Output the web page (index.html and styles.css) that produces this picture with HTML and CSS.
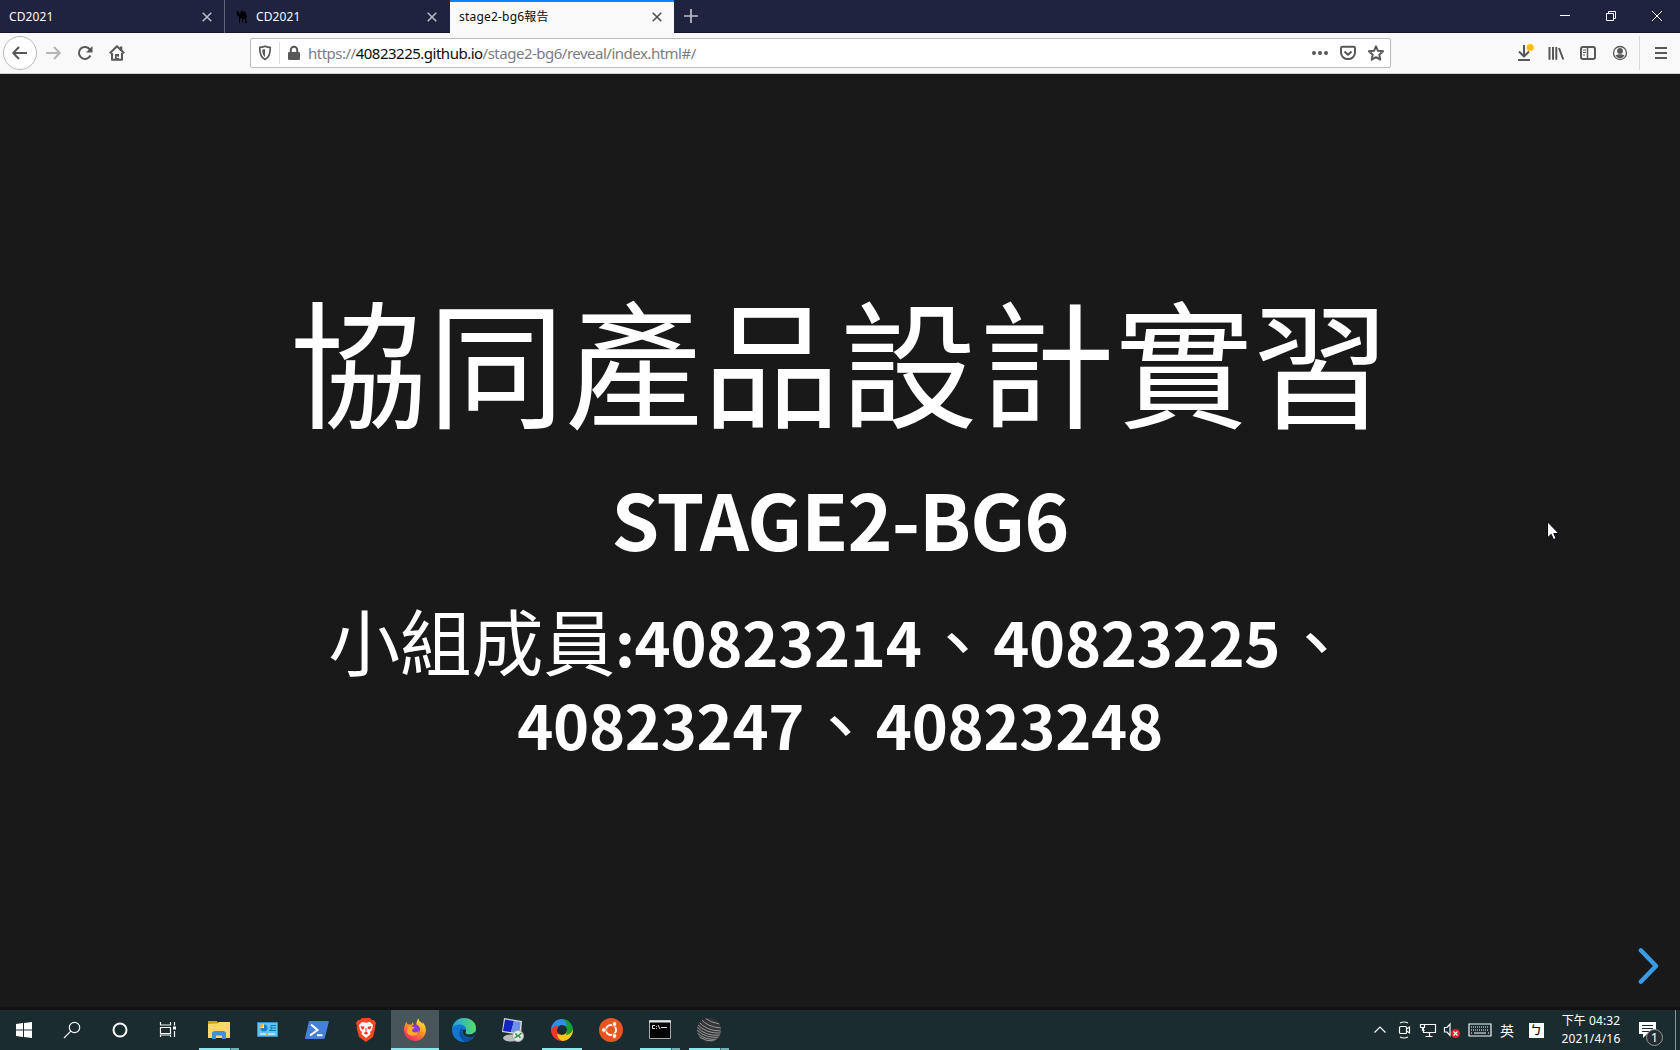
FILE: index.html
```html
<!DOCTYPE html>
<html lang="zh-Hant">
<head>
<meta charset="utf-8">
<title>stage2-bg6報告</title>
<link rel="stylesheet" href="styles.css">
</head>
<body>
<div class="desktop">
  <header class="tabbar">
    <div class="tab"><span class="label">CD2021</span><svg class="close" viewBox="0 0 10 10"><path d="M.7.7l8.6 8.6M9.3.7L.7 9.3"/></svg></div>
    <div class="tab second">
      <svg class="camel" viewBox="0 0 12 13"><path d="M0 2l2-1 1 2 1 1 1-3 1-1 1 2 1-1 2 2 1 4-1 1 1 5H9V9H7v4H6V9L4 8v5H3V7L1 5V3z" fill="#000"/></svg>
      <span class="label">CD2021</span><svg class="close" viewBox="0 0 10 10"><path d="M.7.7l8.6 8.6M9.3.7L.7 9.3"/></svg></div>
    <div class="tab active"><span class="label">stage2-bg6報告</span><svg class="close" viewBox="0 0 10 10"><path d="M.7.7l8.6 8.6M9.3.7L.7 9.3"/></svg></div>
    <svg class="newtab" viewBox="0 0 14 14"><path d="M7 0v14M0 7h14"/></svg>
    <div class="winbtns">
      <svg viewBox="0 0 10 10"><path d="M0 4.5h10"/></svg>
      <svg viewBox="0 0 10 10"><path d="M.5 2.5h7v7h-7zM2.500 2.500v-2h7v7h-2"/></svg>
      <svg viewBox="0 0 10 10"><path d="M0 0l10 10M10 0L0 10"/></svg>
    </div>
  </header>

  <nav class="toolbar">
    <div class="navbtns">
      <div class="back"><svg viewBox="0 0 16 16"><path d="M15 8H1.500M7 2L1.200 8 7 14"/></svg></div>
      <svg class="ico dim" viewBox="0 0 16 16"><path d="M1 8h13.500M9 2l5.800 6L9 14"/></svg>
      <svg class="ico" viewBox="0 0 16 16"><path d="M13.400 10.500A6 6 0 1 1 13 4.600"/><path class="fill" d="M15.500 1v6.500H9z"/></svg>
      <svg class="ico" viewBox="0 0 16 16"><path d="M.8 8.300L8 1.300l7.200 7M3 8v6.800h10V8"/><path class="fill" d="M6 9h4v6H6zM11 1.500h2.300v4H11z"/><path d="M8.700 11.500v1.500" style="stroke:#fff"/></svg>
    </div>
    <div class="urlbar">
      <svg class="ico shield" viewBox="0 0 16 16"><path d="M8 1.200c2 .9 4 1.200 5.300 1.200 0 6-.8 9.800-5.300 12.200C3.500 12.200 2.700 8.400 2.700 2.400 4 2.400 6 2.100 8 1.200z"/><path class="fill" d="M8 4v8C6 10.500 5.400 8.500 5.300 4.700z"/></svg>
      <i class="usep"></i>
      <svg class="ico lock" viewBox="0 0 16 16"><rect class="fill" x="2" y="7" width="12" height="8" rx="1.300"/><path d="M4.800 8V5a3.200 3.200 0 0 1 6.400 0v3"/></svg>
      <span class="url">https://<b>40823225.github.io</b>/stage2-bg6/reveal/index.html#/</span>
      <span class="urlacts">
        <svg class="ico" viewBox="0 0 16 16"><g class="fill"><circle cx="2" cy="8" r="2"/><circle cx="8" cy="8" r="2"/><circle cx="14" cy="8" r="2"/></g></svg>
        <svg class="ico" viewBox="0 0 16 16"><path d="M2.200 1.800h11.600q1.200 0 1.200 1.200v4.500a7 6.600 0 0 1-14 0V3q0-1.200 1.200-1.200zM4.500 6.500L8 9.800l3.500-3.300"/></svg>
        <svg class="ico" viewBox="0 0 16 16"><path d="M8 1.300l2 4.500 5 .5-3.700 3.400 1 5L8 12.200l-4.300 2.500 1-5L1 6.300l5-.5z"/></svg>
      </span>
    </div>
    <div class="tools">
      <svg class="ico" viewBox="0 0 16 16"><path d="M8 0v11M3 6.500l5 5 5-5M2 15h12"/><circle cx="14.200" cy="2.600" r="3.500" fill="#ffbf00" style="stroke:none"/></svg>
      <svg class="ico" viewBox="0 0 16 16"><path d="M1.500 2v12.700M5 2v12.700M8.300 2v12.700M11 3l4.300 11.500"/></svg>
      <svg class="ico" viewBox="0 0 16 16"><rect x="1" y="2" width="14" height="12" rx="2"/><path d="M7.500 2v12" style="stroke-width:1.500"/><path d="M3 5h3M3 7.500h3M3 10h2" style="stroke-width:1"/></svg>
      <svg class="ico" viewBox="0 0 16 16"><circle cx="8" cy="8" r="6.500" style="stroke-width:1.300"/><circle class="fill" cx="8" cy="5.900" r="2.900"/><path class="fill" d="M3.500 10.300q4.500-2 9 0-1.500 3-4.500 3t-4.500-3z"/></svg>
      <i class="tsep"></i>
      <svg class="ico menu" viewBox="0 0 16 16"><path d="M2 3h12M2 8h12M2 13h12"/></svg>
    </div>
  </nav>

  <main class="slide">
    <h1>協同產品設計實習</h1>
    <h2>STAGE2-BG6</h2>
    <h3><span class="line"><span class="han">小組成員</span>:40823214<span class="mark">、</span>40823225<span class="mark">、</span></span><span class="line">40823247<span class="mark">、</span>40823248</span></h3>
    <svg class="next" viewBox="0 0 20 36"><path d="M2.300 2.300L17.500 18 2.300 33.700"/></svg>
    <svg class="cursor" viewBox="0 0 13 20"><path d="M.5.8v16l3.700-3.500 2.300 5.200 2.600-1-2.300-5h5z"/></svg>
  </main>

  <footer class="taskbar">
    <div class="sys">
      <div><svg viewBox="0 0 24 24"><path fill="#fff" d="M4 6l7-1v6.500H4zM12 4.900L20 4v7.500h-8zM4 12.500h7V19l-7-1zM12 12.500h8V20l-8-1z"/></svg></div>
      <div><svg class="line-ico" viewBox="0 0 24 24"><circle cx="14.500" cy="9.500" r="5.200"/><path d="M10.800 13.200L4 20"/></svg></div>
      <div><svg viewBox="0 0 24 24"><circle cx="12" cy="12" r="6.500" fill="none" stroke="#fff" stroke-width="2"/></svg></div>
      <div><svg class="line-ico" viewBox="0 0 24 24"><path d="M4.500 4v3h10V4M4.500 9.500h10v6h-10zM4.500 19v-2h10v2M18.500 4v3.500M18.500 13v6"/><path d="M17 8.500h3v3h-3z" fill="#fff" stroke="none"/></svg></div>
    </div>
    <div class="apps">
      <div class="app run multi"><svg viewBox="0 0 24 24"><path fill="#dc9b13" d="M1 3h9l1 2v3H1z"/><path fill="#ffd66b" d="M1 6l9-.5 2-1.500h11v16H1z"/><path fill="#3d91d4" d="M5 21v-6.500L7 13h10l2 1.500V21h-4v-3.500H9V21z"/></svg></div>
      <div class="app"><svg viewBox="0 0 24 24"><path fill="#5cc5f5" stroke="#2f92ce" d="M1.500 4.500h20v14h-20z"/><circle cx="8" cy="10" r="3.800" fill="#fff"/><path fill="#1780cf" d="M8 10V6.200a3.800 3.800 0 1 1-3.800 3.800z"/><path fill="#f8b137" d="M7.500 9.500V5.700a3.800 3.800 0 0 0-3.800 3.800z"/><path stroke="#1774b5" d="M13 12.500h2v-5h5M15 10h5M15 12.500h5" fill="none"/><path stroke="#fff" d="M4 16h15"/><path stroke="#f8b137" stroke-width="2" d="M10 16h2"/></svg></div>
      <div class="app"><svg viewBox="0 0 24 24"><path fill="#467fdb" d="M4.500 3H23q1 0 .8 1l-4 16q-.3 1-1.300 1H.8q-1 0-.8-1L3.700 4Q4 3 4.500 3z"/><path d="M6 6.500l6.500 5.500L5 17.500M12 17.200h5.500" fill="none" stroke="#fff" stroke-width="2"/></svg></div>
      <div class="app"><svg viewBox="0 0 24 24"><path fill="#fb4420" d="M8 0h8l2 2 2 0 2 3-1 3 .3 2L19 19l-7 5-7-5L2.700 10 3 8 2 5l2-3 2 0z"/><path fill="#fff" d="M8 4l4 .7L16 4l3 3-1 5-2 2 .6 2L12 20l-4.600-4 .6-2-2-2-1-5z"/><path fill="#ed3d22" d="M6.500 8l4 .8-.5 2-2 1zM17.500 8l-4 .8.5 2 2 1zM9.500 15l2.500-1.300 2.500 1.300-2.500 1.700zM11.500 10h1v4h-1z"/></svg></div>
      <div class="app run focus"><svg viewBox="0 0 24 24"><defs><linearGradient id="ff" x1=".8" y1="0" x2=".2" y2="1"><stop stop-color="#ffed3d"/><stop offset=".45" stop-color="#ff9826"/><stop offset="1" stop-color="#f7156e"/></linearGradient></defs><path fill="url(#ff)" d="M3.500 3.500Q4 6 5 6.500 7 6 8 7l2-3q0 3 1.500 3.500h2q-.8-4 2-7 0 2.500 3 4l.7 1.500q.8-1 .5-2 3.800 5 3.100 10A11 11 0 0 1 1 13Q.5 9 3.500 3.500z"/><circle cx="12" cy="11.500" r="5" fill="#8a39dd"/><path fill="#ffad28" d="M5 9q4-2 7 1-3 0-3 3 3 3 7 0-2 5-7 4.500T4 13z"/></svg></div>
      <div class="app"><svg viewBox="0 0 24 24"><defs><linearGradient id="ed"><stop stop-color="#219de2"/><stop offset="1" stop-color="#5ade66"/></linearGradient></defs><circle cx="12" cy="12" r="12" fill="#1177d3"/><path fill="url(#ed)" d="M.3 9.500C2 3 7 0 12 0c7 0 12 4.500 12 10 0 4-3 6.500-7 6.500q-5 0-3-4c1.500-6-9-8.500-13.700-3z"/><path fill="#1a2c30" d="M14 12.500q-2 4 3 4 3.500 0 6-2.500l1.500 1.500-4 4q-2 .5-5-.5Q10 17.500 11 12q2-1 3 .5z"/><path fill="#0d519e" d="M9 10q-5 8 4 14 5 0 9-5-5 2-9-.5-4-3-2-7z"/></svg></div>
      <div class="app"><svg viewBox="0 0 24 24"><ellipse cx="10" cy="20" rx="8" ry="3.500" fill="#bdbdbd"/><path fill="#d9d9d5" d="M3 0l18 3-1 14L1 14z"/><path fill="#1524c6" d="M4 1.500l9 1.500-3 11-8-1z"/><path fill="#6c8fea" d="M13 3l6.500 1-1 11-8.500-1z"/><circle cx="17" cy="18" r="5.500" fill="#e7e8e5" stroke="#aaa"/><path d="M13.500 20l3-2-2-2.500M20.500 15l-3 2.500 2 2.500" stroke="#269646" stroke-width="1.500" fill="none"/></svg></div>
      <div class="app run"><svg viewBox="0 0 24 24"><g fill="none" stroke-width="6"><path stroke="#318df0" d="M4 12a8 8 0 0 1 8-8"/><path stroke="#159c32" d="M12 4a8 8 0 0 1 8 8"/><path stroke="#fac819" d="M20 12a8 8 0 0 1-8 8"/><path stroke="#ec3729" d="M12 20a8 8 0 0 1-8-8"/></g><path fill="#318df0" d="M11 1q5 1 6 7l-5-1z"/><path fill="#159c32" d="M23 11q-1 5-7 6l1-5z"/><path fill="#fac819" d="M13 23q-5-1-6-7l5 1z"/><path fill="#ec3729" d="M1 13q1-5 7-6l-1 5z"/></svg></div>
      <div class="app"><svg viewBox="0 0 24 24"><circle cx="12" cy="12" r="12" fill="#e95420"/><circle cx="12" cy="12" r="5" fill="none" stroke="#fff" stroke-width="2"/><g fill="#fff" stroke="#e95420" stroke-width="1"><circle cx="5" cy="12" r="2.400"/><circle cx="15.500" cy="6" r="2.400"/><circle cx="15.500" cy="18" r="2.400"/></g></svg></div>
      <div class="app run multi"><svg viewBox="0 0 24 24"><path fill="#040404" stroke="#aaa" d="M1.500 2.500h21v18h-21z"/><path stroke="#e8e8e8" stroke-width="2" d="M1 3.500h22"/><path stroke="#ddd" fill="none" d="M7 7.500H4.500v3H7M8.500 8v.8M8.500 10v.8M10 7l2 4M13 9.500h6"/></svg></div>
      <div class="app run multi"><svg viewBox="0 0 24 24"><defs><clipPath id="ball"><circle cx="12" cy="12" r="12"/></clipPath></defs><circle cx="12" cy="12" r="12" fill="#343637"/><g clip-path="url(#ball)" fill="none" stroke="#a0a3a2" stroke-width=".9"><path d="M4 1q6 8 20 9M1 3q8 10 23 10M0 6q9 10 24 9M0 9q9 10 24 8M0 12q9 9 24 7M0 15q9 8 22 6M2 19q8 5 17 4M8 0q6 5 15 6"/></g></svg></div>
    </div>
    <div class="tray">
      <div class="cell"><svg class="line-ico" viewBox="0 0 24 24"><path d="M6.500 14.500l5.500-5.500 5.500 5.500"/></svg></div>
      <div class="cell"><svg class="line-ico" viewBox="0 0 24 24"><rect x="7.500" y="8.500" width="7" height="7" rx="1"/><path d="M14.500 11l3-2v6l-3-2M8 5q4-2 8 0M8 19q4 2 8 0"/></svg></div>
      <div class="cell"><svg class="line-ico" viewBox="0 0 24 24"><path d="M9 6.500h10.500v8H7.500V10M13.500 14.500v4M9.500 18.500h7M4.500 6.500h4v3h-4zM6.500 9.500v3h2"/></svg></div>
      <div class="cell"><svg class="line-ico" viewBox="0 0 24 24"><path d="M4.500 9.500H7l3-3.500v11.500l-3-3.500H4.500z"/><circle cx="15.500" cy="15.500" r="4.500" fill="#dd252d" stroke="none"/><path d="M13.500 13.500l4 4M17.500 13.500l-4 4"/></svg></div>
      <div class="cell kb"><svg class="line-ico" viewBox="0 0 24 14"><path d="M1 1h22v12H1z"/><path stroke-dasharray="1 1" d="M3 4h18M3 7h18"/><path d="M3 10h1M6 10h12M20 10h1"/></svg></div>
      <div class="cell ime">英</div>
      <div class="cell bopo"><span>ㄅ</span></div>
      <div class="clock"><span>下午 04:32</span><span class="date">2021/4/16</span></div>
      <div class="notice"><svg viewBox="0 0 26 26"><path fill="#fff" d="M1 2h17v12H9l-4 4v-4H1z"/><path stroke="#1a2c30" d="M4 5.500h11M4 8.500h11M4 11.500h7"/><circle cx="16.500" cy="17.500" r="8" fill="#262d2f" stroke="#949b9c"/><text x="16.500" y="22" text-anchor="middle">1</text></svg></div>
      <i class="edge"></i>
    </div>
  </footer>
</div>
</body>
</html>
```

FILE: styles.css
```css
* { box-sizing: border-box; }
body { margin: 0; overflow: hidden; font-family: "Noto Sans", "Noto Sans CJK TC", sans-serif; }
svg { display: block; flex: none; overflow: visible; }
.desktop { width: 1680px; height: 1050px; display: flex; flex-direction: column; background: #191919; }

/* Tab strip */
.tabbar { height: 33px; flex: none; display: flex; background: #202340; border-bottom: 1px solid #14152d; font-size: 12px; color: #f9f9fa; }
.tab { width: 225px; height: 33px; flex: none; display: flex; align-items: center; padding: 0 12px 0 9px; border-right: 1px solid #62647a; }
.tab .label { flex: 1; white-space: nowrap; letter-spacing: .1px; line-height: 32px; }
.tab.second { border-right: 0; padding: 0 13px 0 11px; }
.tab.active { width: 224px; background: #f9f9f9; color: #0c0c0d; border: 0; border-top: 2px solid #0a84ff; padding-bottom: 2px; padding-right: 12px; }
.close { width: 10px; height: 10px; fill: none; stroke: #bcbdc8; stroke-width: 1.500; }
.active .close { stroke: #4b4b4d; }
.tab.active .label { letter-spacing: .2px; }
.camel { width: 12px; height: 13px; margin-right: 8px; }
.newtab { width: 14px; height: 14px; margin: 9px 0 0 10px; stroke: #bebec9; stroke-width: 1.700; }
.winbtns { margin: 11px 18px 0 auto; display: flex; gap: 36px; }
.winbtns svg { width: 10px; height: 10px; fill: none; stroke: #fff; stroke-width: 1; }

/* Navigation toolbar */
.toolbar { height: 41px; flex: none; display: flex; align-items: center; background: #f9f9f9; border-bottom: 1px solid #d0d0d0; padding-left: 3px; }
.ico, .back svg { width: 16px; height: 16px; fill: none; stroke: #58585a; stroke-width: 2; stroke-linejoin: round; }
.fill { fill: #58585a; stroke: none; }
.navbtns { width: 247px; display: flex; align-items: center; gap: 16px; }
.back { width: 34px; height: 34px; margin-right: -8px; border: 1px solid #b9b9b9; border-radius: 50%; background: #fff; display: grid; place-items: center; }
.ico.dim { stroke: #b5b5b5; }
.urlbar { width: 1141px; height: 30px; flex: none; border: 1px solid #bcbcbc; border-radius: 2px; background: #fff; display: flex; align-items: center; padding: 0 6px; }
.ico.shield { stroke-width: 1.700; }
.usep { width: 1px; height: 22px; margin: 0 6px; background: #dedede; }
.url { margin-left: 6px; color: #7c7c80; font-size: 15px; line-height: 28px; letter-spacing: -.5px; white-space: nowrap; }
.url b { color: #0c0c0d; font-weight: 400; }
.urlacts { margin-left: auto; display: flex; gap: 12px; }
.tools { flex: 1; display: flex; align-items: center; justify-content: flex-end; gap: 16px; padding-right: 11px; }
.tsep { width: 1px; height: 34px; margin: 0 -3px 0 -5px; background: #d9d9db; }

/* Slide */
.slide { flex: 1; position: relative; display: flex; flex-direction: column; align-items: center; color: #fff; border-bottom: 3px solid #121212; font-family: "Noto Sans CJK TC", sans-serif; white-space: nowrap; }
h1, h2, h3 { margin: 0; }
h1 { margin-top: 202px; font-size: 137.500px; line-height: 165px; font-weight: 400; }
h2 { margin-top: 36px; font-size: 76.500px; line-height: 82px; font-weight: 700; letter-spacing: -.9px; }
h3 { margin-top: 40px; font-size: 61.300px; line-height: 83px; font-weight: 700; letter-spacing: -.3px; }
.line { display: flex; justify-content: center; }
.han, .mark { font-size: 72px; line-height: 80px; font-weight: 400; }
.next { position: absolute; right: 21px; bottom: 23px; width: 21px; height: 36px; fill: none; stroke: #3b9ce5; stroke-width: 4.500; stroke-linecap: round; stroke-linejoin: round; }
.cursor { position: absolute; left: 1547px; top: 447px; width: 13px; height: 20px; fill: #fff; stroke: #080812; }

/* Taskbar */
.taskbar { height: 40px; flex: none; display: flex; background: #1a2c30; color: #fff; }
.taskbar svg { width: 24px; height: 24px; }
.line-ico { fill: none; stroke: #f6f6f6; stroke-width: 1.200; }
.sys { display: flex; width: 195px; }
.sys div { width: 48px; display: grid; place-items: center; }
.apps { display: flex; gap: 1px; }
.app { width: 48px; display: grid; place-items: center; }
.run { background: linear-gradient(#8ae7ef, #8ae7ef) 4px 38px / 40px 2px no-repeat; }
.multi { background: linear-gradient(90deg, #8ae7ef 31px, #416d73 31px 32px, #6eb2b8 32px) 4px 38px / 40px 2px no-repeat; }
.focus { background: #485659; border-bottom: 2px solid #8ae7ef; padding-top: 2px; }
.tray { margin-left: auto; display: flex; width: 312px; }
.cell { width: 24px; flex: none; display: grid; place-items: center; }
.cell.kb { width: 31px; }
.taskbar .kb svg { height: 14px; }
.cell.ime { font: 14px/38px "Noto Sans CJK TC", sans-serif; }
.cell.bopo { width: 34px; }
.bopo span { width: 15px; height: 15px; background: #fff; color: #111; font: 500 12px/14px "Noto Sans CJK TC", sans-serif; text-align: center; }
.clock { width: 76px; display: flex; flex-direction: column; align-items: center; padding-top: 2px; font-size: 12px; line-height: 18px; letter-spacing: .1px; white-space: nowrap; }
.date { letter-spacing: .25px; }
.taskbar .notice svg { width: 26px; height: 26px; }
.notice { width: 46px; padding: 10px 0 0 9px; }
.notice text { fill: #fff; font-size: 13px; }
.edge { width: 1px; background: #87979a; }
```
